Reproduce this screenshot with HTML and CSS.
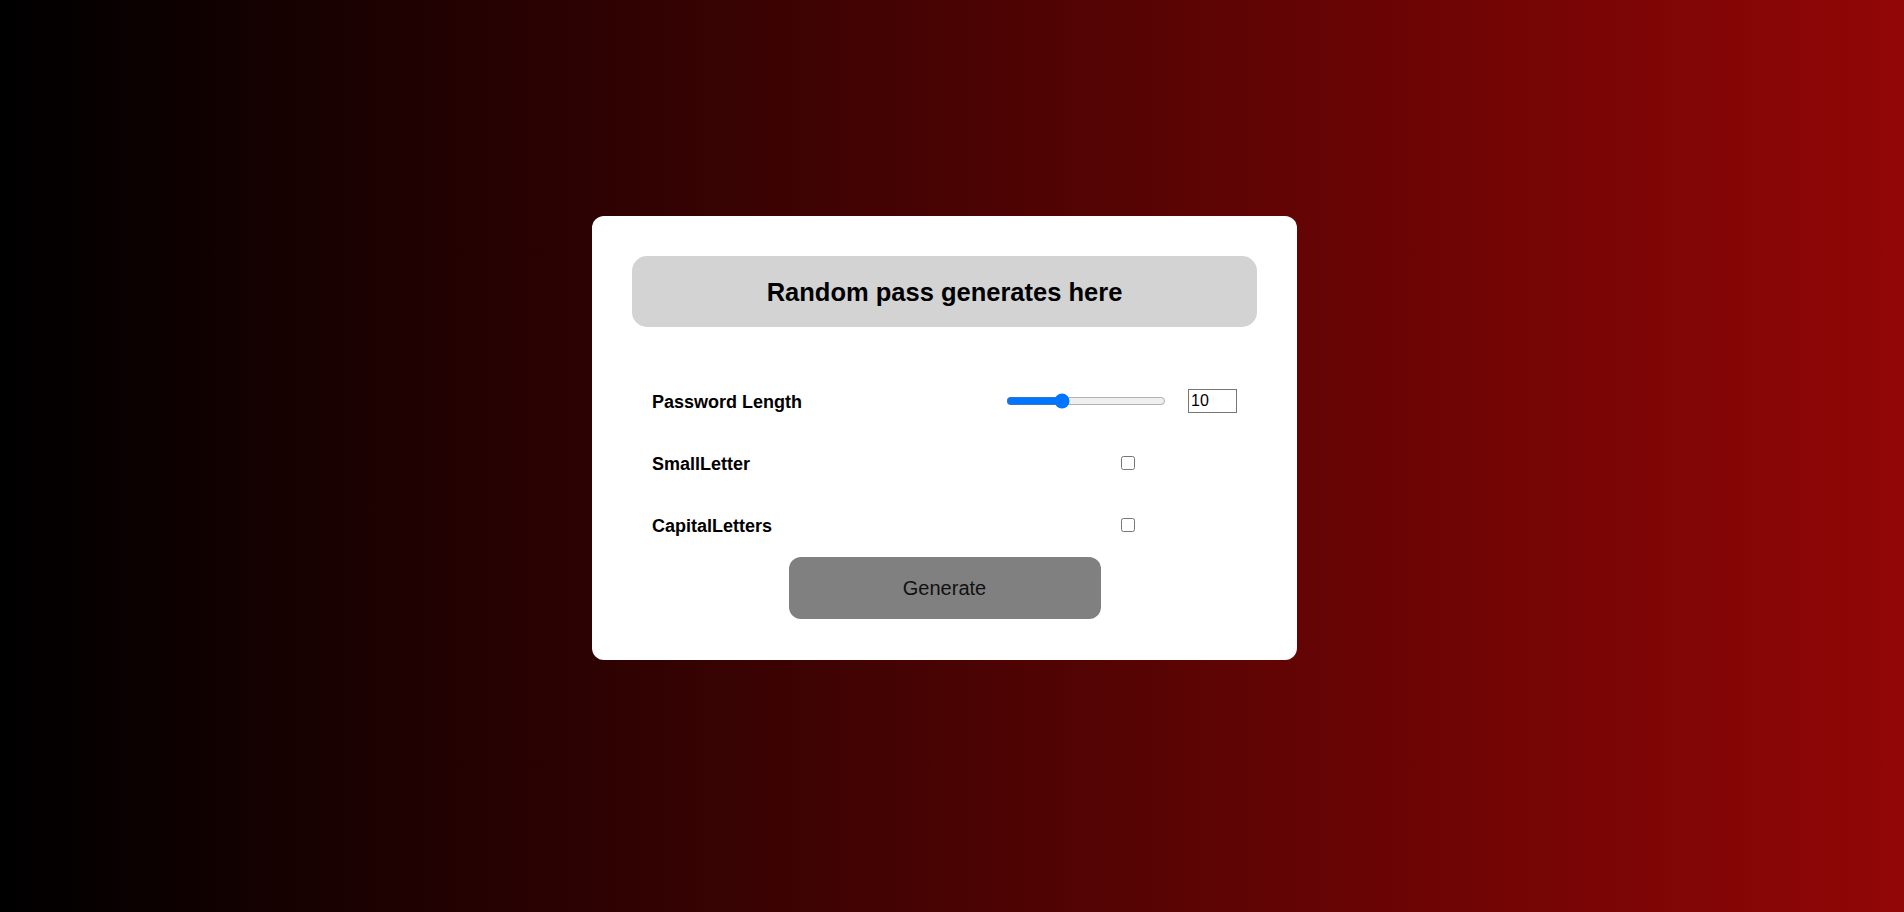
FILE: index.html
```html
<!DOCTYPE html>
<html lang="en">
<head>
<meta charset="UTF-8">
<title>Password Generator</title>
<link rel="stylesheet" href="styles.css">
</head>
<body>
  <main class="card">
    <div class="display">Random pass generates here</div>
    <div class="settings">
      <div class="row">
        <label class="label" for="len">Password Length</label>
        <div class="controls">
          <input class="slider" type="range" id="len" min="5" max="20" value="10">
          <input class="number" type="number" value="10" min="5" max="20">
        </div>
      </div>
      <div class="row">
        <label class="label" for="small">SmallLetter</label>
        <div class="controls center">
          <input class="check" type="checkbox" id="small">
        </div>
      </div>
      <div class="row">
        <label class="label" for="cap">CapitalLetters</label>
        <div class="controls center">
          <input class="check" type="checkbox" id="cap">
        </div>
      </div>
    </div>
    <button class="generate" type="button">Generate</button>
  </main>
</body>
</html>
```

FILE: styles.css
```css
html, body {
  margin: 0;
  padding: 0;
}

body {
  min-height: 100vh;
  box-sizing: border-box;
  background: linear-gradient(to right, #000000, #920606);
  display: flex;
  justify-content: center;
  align-items: flex-start;
  padding-top: 216px;
  padding-right: 15px;
  font-family: "Liberation Sans", Arial, sans-serif;
}

.card {
  width: 705px;
  box-sizing: border-box;
  background: #ffffff;
  border-radius: 12px;
  padding: 40px 40px 41px;
  display: flex;
  flex-direction: column;
  align-items: stretch;
}

.display {
  height: 71px;
  background: #d3d3d3;
  border-radius: 15px;
  display: flex;
  align-items: center;
  justify-content: center;
  font-size: 25.5px;
  font-weight: bold;
  color: #000;
  padding-top: 2px;
  box-sizing: border-box;
}

.settings {
  margin-top: 43px;
  padding: 0 20px;
  display: flex;
  flex-direction: column;
}

.row {
  height: 62px;
  display: flex;
  align-items: center;
  justify-content: space-between;
}

.label {
  font-size: 18px;
  font-weight: bold;
  color: #000;
  padding-top: 2px;
}

.controls {
  width: 233px;
  display: flex;
  align-items: center;
  justify-content: space-between;
}

.controls.center {
  justify-content: center;
}

.slider {
  width: 160px;
  margin: 2px;
}

.number {
  width: 49px;
  height: 24px;
  box-sizing: border-box;
  border: 1px solid #767676;
  border-radius: 0;
  padding: 1px 2px;
  font-family: "Liberation Sans", Arial, sans-serif;
  font-size: 16px;
  color: #000;
  margin: 0 0 1px 0;
}

.check {
  width: 14px;
  height: 14px;
  margin: 3px 3px 3px 18px;
}

.generate {
  align-self: center;
  margin-top: 1px;
  width: 312px;
  height: 62px;
  border: none;
  border-radius: 12px;
  background: #808080;
  color: #111;
  font-family: "Liberation Sans", Arial, sans-serif;
  font-size: 20px;
}
```
